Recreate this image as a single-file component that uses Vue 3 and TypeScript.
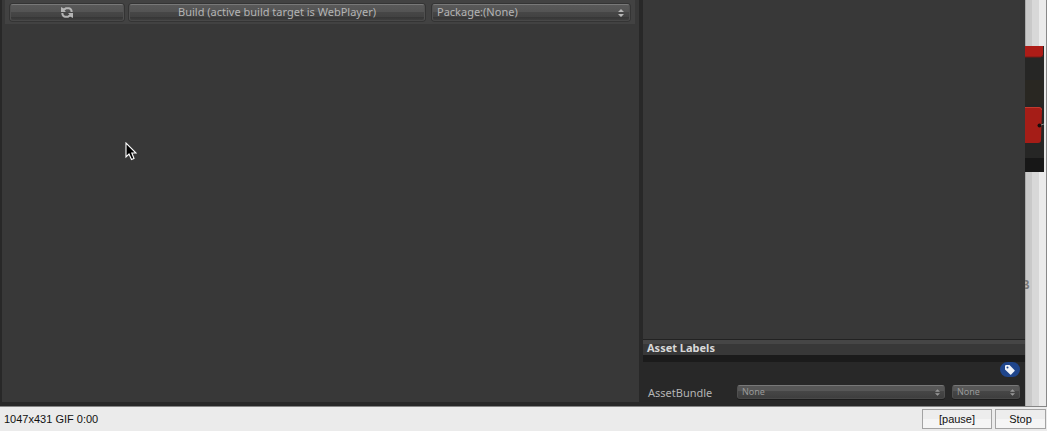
<script setup lang="ts">
import { ref } from 'vue'

const packages = ['Package:(None)']
const selectedPackage = ref(packages[0])
const bundle = ref('None')
const variant = ref('None')
const paused = ref(false)
</script>

<template>
  <div class="screen">
    <div class="desktop">
      <main class="builder">
        <div class="toolbar">
          <button class="control refresh" type="button" aria-label="Refresh">
            <svg width="12" height="11" viewBox="0 0 12 11" fill="none" stroke="currentColor" stroke-width="2">
              <path d="M3 2.5L5 1.2H8Q10.5 1.5 10.7 5" />
              <path d="M9 8.5L7 9.8H4Q1.5 9.5 1.3 6" />
              <path d="M0 0V5H5L3.5 3.5L5 2.2L3 1.5ZM12 11V6H7L8.5 7.5L7 8.8L9 9.5Z" fill="currentColor" stroke="none" />
            </svg>
          </button>
          <button class="control build" type="button">Build (active build target is WebPlayer)</button>
          <div class="picker package">
            <select v-model="selectedPackage" class="control" aria-label="Package">
              <option v-for="item in packages" :key="item">{{ item }}</option>
            </select>
            <svg class="arrows" width="6" height="8" viewBox="0 0 6 8"><path d="M0 3L3 0L6 3ZM0 5H6L3 8Z" /></svg>
          </div>
        </div>
        <svg class="pointer" width="12" height="19" viewBox="0 0 12 19">
          <path d="M1 1V15L4 12L6.5 17.5L9 16.5L6.8 11H11Z" fill="#000" stroke="#fff" stroke-width="1.1" />
        </svg>
      </main>
      <aside class="inspector">
        <div class="preview"></div>
        <h2 class="heading">Asset Labels</h2>
        <section class="labels">
          <div class="tag-row">
            <button class="tag" type="button" aria-label="Add label">
              <svg width="10" height="10" viewBox="0 0 10 10">
                <path fill="#f0f4fa" fill-rule="evenodd" d="M0 1.2Q0 0 1.2 0H4.5L9.6 5.2Q10 5.7 9.6 6.1L6.2 9.6Q5.7 10 5.2 9.6L0 4.4ZM1.5 2.4A1 1 0 1 0 3.5 2.4A1 1 0 1 0 1.5 2.4Z" />
              </svg>
            </button>
          </div>
          <div class="bundle-row">
            <label for="bundle">AssetBundle</label>
            <div class="picker name">
              <select id="bundle" v-model="bundle" class="control small"><option>None</option></select>
              <svg class="arrows" width="5" height="7" viewBox="0 0 6 8"><path d="M0 3L3 0L6 3ZM0 5H6L3 8Z" /></svg>
            </div>
            <div class="picker variant">
              <select v-model="variant" class="control small" aria-label="AssetBundle variant"><option>None</option></select>
              <svg class="arrows" width="5" height="7" viewBox="0 0 6 8"><path d="M0 3L3 0L6 3ZM0 5H6L3 8Z" /></svg>
            </div>
          </div>
        </section>
      </aside>
      <div class="behind">
        <svg class="artwork" width="19" height="126" viewBox="0 0 19 126">
          <path d="M0 0H19V126H0Z" fill="#262625" />
          <path d="M0 34H18V58H0Z" fill="#292722" />
          <path d="M0 112H19V126H0Z" fill="#171717" />
          <path d="M0 0H18V9Q18 11 16 11H0Z" fill="#ad1c17" />
          <path d="M0 11H16L18 9" fill="none" stroke="#741a16" />
          <path d="M0 61H14Q17 61 17 64L16 94Q16 97 13 97H0Z" fill="#a51d17" />
          <path d="M0 61.5H14Q16.5 61.5 16.5 64" fill="none" stroke="#c23a2e" />
          <circle cx="14.5" cy="79.5" r="2" fill="#170d0c" />
          <path d="M16 79L19 78" stroke="#888" />
        </svg>
        <span class="fragment">B</span>
      </div>
    </div>
    <footer class="player">
      <span class="status">1047x431 GIF 0:00</span>
      <button class="plain pause" type="button" @click="paused = !paused">[pause]</button>
      <button class="plain stop" type="button">Stop</button>
    </footer>
  </div>
</template>

<style>
body {
  margin: 0;
}
</style>

<style scoped>
.screen {
  display: flex;
  flex-direction: column;
  height: 100vh;
  overflow: hidden;
  background: #ebebeb;
  font-family: "Noto Sans", "Open Sans", sans-serif;
  font-size: 11px;
  color: #b4b4b4;
}
.screen *,
.screen {
  box-sizing: border-box;
}
.desktop {
  display: flex;
  flex: 1;
  min-height: 0;
  background: #282828;
  border-bottom: 1px solid #858585;
}
.builder {
  position: relative;
  flex: 1;
  margin: 0 4px 4px 2px;
  background: #383838;
}
.toolbar {
  display: flex;
  height: 24px;
  margin: 0 4px 0 3px;
  padding: 4px 5px 2px;
  background: #424242;
}
.control {
  height: 17px;
  padding: 0 0 1px;
  border: 1px solid #505050;
  border-top-color: #787878;
  border-bottom-color: #484848;
  border-radius: 3px;
  background: linear-gradient(#595959 0, #535353 50%, #464646 50%, #424242 80%, #363636 81%, #3e3e3e 100%);
  box-shadow: 0 0 0 1px #343434;
  color: #b4b4b4;
  font: inherit;
  line-height: 14px;
}
.refresh {
  display: flex;
  justify-content: center;
  align-items: center;
  width: 114px;
  margin-right: 5px;
}
.build {
  flex: 1;
  margin-right: 7px;
}
.picker {
  display: flex;
  align-items: flex-start;
  position: relative;
}
.picker select {
  width: 100%;
  padding-left: 4px;
  appearance: none;
}
.package {
  width: 198px;
}
.arrows {
  position: absolute;
  right: 6px;
  top: 5px;
  fill: #b6b6b6;
}
.pointer {
  position: absolute;
  left: 123px;
  top: 142px;
}
.inspector {
  display: flex;
  flex-direction: column;
  width: 382px;
}
.preview {
  flex: 1;
  background: #383838;
}
.heading {
  height: 16px;
  margin: 0;
  padding-left: 4px;
  border-top: 1px solid #222;
  background: linear-gradient(#464646 0 4px, #383838 4px);
  color: #d8d8d8;
  font-size: 11px;
  font-weight: 700;
  line-height: 16px;
}
.labels {
  height: 51px;
  padding: 0 5px;
  border-top: 7px solid #1b1b1b;
}
.tag-row {
  display: flex;
  justify-content: flex-end;
}
.tag {
  display: flex;
  align-items: center;
  justify-content: center;
  width: 20px;
  height: 15px;
  padding: 0;
  border: 0;
  border-radius: 8px;
  background: #1f458b;
}
.bundle-row {
  display: flex;
  align-items: center;
  height: 14px;
  margin-top: 8px;
}
.bundle-row label {
  width: 89px;
}
.name {
  flex: 1;
  margin-right: 7px;
}
.variant {
  width: 68px;
}
.control.small {
  height: 14px;
  padding-bottom: 0;
  background: linear-gradient(#575757 0 45%, #464646 45%, #3e3e3e 100%);
  box-shadow: 0 1px 0 #1b1b1b;
  font-size: 9px;
  line-height: 12px;
  color: #999;
}
.name .arrows,
.variant .arrows {
  right: 5px;
  top: 4px;
  fill: #999;
}
.behind {
  position: relative;
  width: 22px;
  overflow: hidden;
  background: linear-gradient(90deg, #aaa 0 1px, #c9c9c9 1px 7px, #d8d8d8 7px 14px, #ebebeb 14px 21px, #888 21px);
}
.artwork {
  position: absolute;
  left: 0;
  top: 46px;
}
.fragment {
  position: absolute;
  left: -4px;
  top: 277px;
  color: #777;
  font: bold 12px/16px "Liberation Sans", sans-serif;
}
.player {
  display: flex;
  align-items: center;
  height: 24px;
  padding: 0 1px 0 4px;
  color: #111;
  font: 11px/16px "Liberation Sans", Arial, sans-serif;
}
.status {
  flex: 1;
}
.plain {
  height: 20px;
  padding: 0;
  border: 1px solid #a3a3a3;
  background: linear-gradient(#ededed 50%, #f5f5f5 50%);
  color: #111;
  font: inherit;
}
.pause {
  width: 70px;
  margin-right: 3px;
}
.stop {
  width: 51px;
}
</style>
